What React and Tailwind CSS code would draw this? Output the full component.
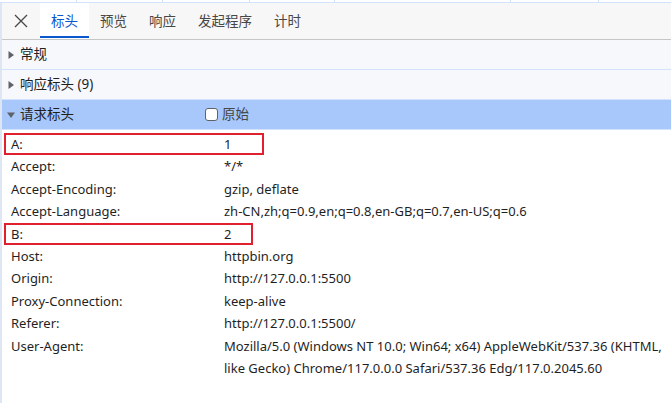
import React from 'react';

const tabs = ['标头', '预览', '响应', '发起程序', '计时'];

const rows = [
  { k: 'A:', v: '1', box: 'w-[260px]' },
  { k: 'Accept:', v: '*/*' },
  { k: 'Accept-Encoding:', v: 'gzip, deflate' },
  { k: 'Accept-Language:', v: 'zh-CN,zh;q=0.9,en;q=0.8,en-GB;q=0.7,en-US;q=0.6' },
  { k: 'B:', v: '2', box: 'w-[249px]' },
  { k: 'Host:', v: 'httpbin.org' },
  { k: 'Origin:', v: 'http://127.0.0.1:5500' },
  { k: 'Proxy-Connection:', v: 'keep-alive' },
  { k: 'Referer:', v: 'http://127.0.0.1:5500/' },
  {
    k: 'User-Agent:',
    v: 'Mozilla/5.0 (Windows NT 10.0; Win64; x64) AppleWebKit/537.36 (KHTML, like Gecko) Chrome/117.0.0.0 Safari/537.36 Edg/117.0.2045.60',
  },
];

function Arrow({ open }) {
  return (
    <svg width="8" height="8" viewBox="0 0 8 8" className="shrink-0">
      {open
        ? <path d="M0 1.5 L8 1.5 L4 7 Z" fill="#5f6368" />
        : <path d="M1.5 0 L7 4 L1.5 8 Z" fill="#5f6368" />}
    </svg>
  );
}

function Section({ title, open, children }) {
  return (
    <div
      className={`h-[30px] flex items-center gap-[5px] pl-[5px] border-b border-[#d3e3fd] ${
        open ? 'bg-[#a8c7fa]' : 'bg-[#f6f8fc]'
      }`}
    >
      <Arrow open={open} />
      <span className="text-[13.5px] text-[#1f1f1f]">{title}</span>
      {children}
    </div>
  );
}

export default function App() {
  return (
    <div
      className="w-[671px] h-[403px] bg-white overflow-hidden"
      style={{ fontFamily: '"Noto Sans", "Noto Sans CJK SC", sans-serif' }}
    >
      {/* strip left from the pane above */}
      <div className="h-[3px] flex border-b border-[#d3e3fd]">
        <div className="w-[77px] border-r border-[#d3e3fd]" />
        <div className="w-[86px] border-r border-[#d3e3fd]" />
        <div className="w-[87px] border-r border-[#d3e3fd]" />
        <div className="w-[85px] border-r border-[#d3e3fd]" />
        <div className="w-[176px] border-r border-[#d3e3fd]" />
        <div className="w-[88px] border-r border-[#d3e3fd]" />
      </div>

      <div className="border-l-2 border-[#dfe6f3] h-full">
        {/* Tabs */}
        <div className="h-[37px] flex items-stretch bg-[#f7f7f7] border-b border-[#c4c7c5]">
          <div className="w-[38px] flex items-center justify-center">
            <svg width="14" height="14" viewBox="0 0 14 14">
              <path d="M1 1 L13 13 M13 1 L1 13" stroke="#474747" strokeWidth="1.3" />
            </svg>
          </div>
          {tabs.map((t, i) => (
            <div
              key={t}
              className={`px-[11px] flex items-center text-[13.5px] relative ${
                i === 0 ? 'bg-white text-[#0b57d0]' : 'text-[#474747]'
              }`}
            >
              {t}
              {i === 0 && <div className="absolute left-0 right-0 bottom-[1px] h-[2px] bg-[#0b57d0]" />}
            </div>
          ))}
        </div>

        <Section title="常规" />
        <Section title="响应标头 (9)" />
        <Section title="请求标头" open>
          <div className="ml-[126px] flex items-center gap-[4px]">
            <div className="w-[13px] h-[13px] rounded-[3px] border border-[#5f6368] bg-white" />
            <span className="text-[13.5px] text-[#474747]">原始</span>
          </div>
        </Section>

        <div className="pt-[3px] text-[13px] text-[#1f1f1f]">
          {rows.map(r => (
            <div key={r.k} className="relative flex leading-[22.4px]">
              <div className="w-[222px] pl-[9px] shrink-0">{r.k}</div>
              <div className="w-[440px]">{r.v}</div>
              {r.box && (
                <div className={`absolute left-[2px] top-[0px] h-[22px] border-2 border-[#e0202e] ${r.box}`} />
              )}
            </div>
          ))}
        </div>
      </div>
    </div>
  );
}
